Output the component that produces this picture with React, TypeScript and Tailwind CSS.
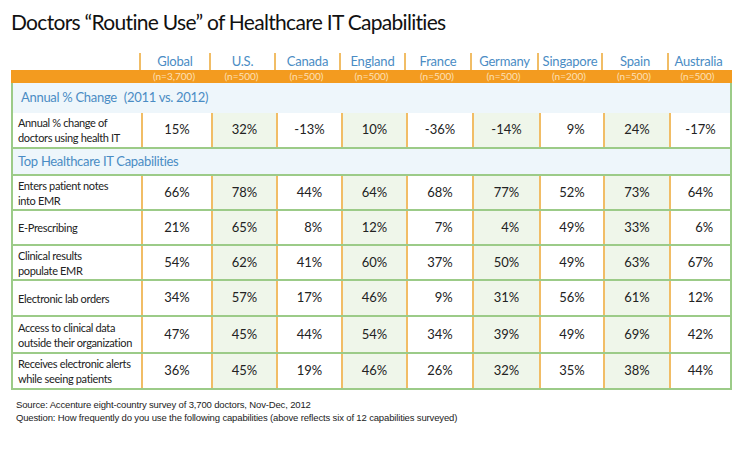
import React from "react";

const cols = ["Global", "U.S.", "Canada", "England", "France", "Germany", "Singapore", "Spain", "Australia"];
const ns = ["(n=3,700)", "(n=500)", "(n=500)", "(n=500)", "(n=500)", "(n=500)", "(n=200)", "(n=500)", "(n=500)"];
const shaded = [false, true, false, true, false, true, false, true, false];

const rows: { label: string[]; vals: string[]; h: string }[] = [
  { label: ["Enters patient notes", "into EMR"], vals: ["66%", "78%", "44%", "64%", "68%", "77%", "52%", "73%", "64%"], h: "h-[35px]" },
  { label: ["E-Prescribing"], vals: ["21%", "65%", "8%", "12%", "7%", "4%", "49%", "33%", "6%"], h: "h-[35px]" },
  { label: ["Clinical results", "populate EMR"], vals: ["54%", "62%", "41%", "60%", "37%", "50%", "49%", "63%", "67%"], h: "h-[35px]" },
  { label: ["Electronic lab orders"], vals: ["34%", "57%", "17%", "46%", "9%", "31%", "56%", "61%", "12%"], h: "h-[36px]" },
  { label: ["Access to clinical data", "outside their organization"], vals: ["47%", "45%", "44%", "54%", "34%", "39%", "49%", "69%", "42%"], h: "h-[37px]" },
  { label: ["Receives electronic alerts", "while seeing patients"], vals: ["36%", "45%", "19%", "46%", "26%", "32%", "35%", "38%", "44%"], h: "h-[36px]" },
];

const grid = "grid grid-cols-[128px_70px_65px_65px_65px_66px_67px_64px_66px_61px]";
const font = { fontFamily: "Lato, 'Open Sans', sans-serif" };

function fmt(v: string) {
  const digits = v.replace(/[^0-9]/g, "");
  if (digits.length === 1 && !v.startsWith("-")) return "\u2007" + v;
  return v;
}

function DataRow({ label, vals, h, top }: { label: string[]; vals: string[]; h: string; top: boolean }) {
  return (
    <div className={`${grid} ${h} ${top ? "border-t-2 border-[#9ccb88]" : ""}`}>
      <div className="flex flex-col justify-center pl-[5px] text-[11px] leading-[15px] tracking-[-0.35px] whitespace-nowrap text-[#222]">
        {label.map((l) => (
          <div key={l}>{l}</div>
        ))}
      </div>
      {vals.map((v, i) => (
        <div
          key={i}
          className={`flex items-center justify-center border-l-2 border-[#f1bd66] text-[13px] text-[#222] ${shaded[i] ? "bg-[#eff6ea]" : "bg-white"}`}
        >
          {fmt(v)}
        </div>
      ))}
    </div>
  );
}

export default function App() {
  return (
    <div className="w-[750px] h-[458px] bg-white overflow-hidden" style={font}>
      <div className="pl-[11px] pt-[8px] h-[53px] text-[21px] leading-[28px] tracking-[-0.7px] text-[#111]">
        Doctors “Routine Use” of Healthcare IT Capabilities
      </div>
      <div className="ml-[11px] w-[721px]">
        <div className={`${grid} h-[17px]`}>
          <div />
          {cols.map((c) => (
            <div key={c} className="border-l-2 border-[#f1bd66] text-center text-[13px] leading-[17px] tracking-[-0.2px] text-[#4a8cc4]">
              {c}
            </div>
          ))}
        </div>
        <div className={`${grid} h-[13px] bg-[#f39b1f]`}>
          <div />
          {ns.map((n, i) => (
            <div key={i} className="text-center text-[10px] leading-[13px] text-[#fde0b8]">
              {n}
            </div>
          ))}
        </div>
        <div className="border-x-2 border-b-2 border-[#9ccb88]">
          <div className="h-[30px] bg-[#eef6fb] flex items-center pl-[8px] text-[13px] tracking-[-0.3px] text-[#4a8cc4]">
            <span>Annual % Change</span>
            <span className="ml-[7px]">(2011 vs. 2012)</span>
          </div>
          <DataRow label={["Annual % change of", "doctors using health IT"]} vals={["15%", "32%", "-13%", "10%", "-36%", "-14%", "9%", "24%", "-17%"]} h="h-[34px]" top={false} />
          <div className="h-[27px] border-t-2 border-[#9ccb88] bg-[#eef6fb] flex items-center pl-[5px] text-[13px] tracking-[-0.3px] text-[#4a8cc4]">
            Top Healthcare IT Capabilities
          </div>
          {rows.map((r) => (
            <DataRow key={r.label[0]} label={r.label} vals={r.vals} h={r.h} top={true} />
          ))}
        </div>
      </div>
      <div className="pl-[16px] pt-[8px] text-[9.5px] leading-[13px] tracking-[-0.15px] text-[#222]" style={{ fontFamily: "'Liberation Sans', sans-serif" }}>
        <div>Source: Accenture eight-country survey of 3,700 doctors, Nov-Dec, 2012</div>
        <div>Question: How frequently do you use the following capabilities (above reflects six of 12 capabilities surveyed)</div>
      </div>
    </div>
  );
}
